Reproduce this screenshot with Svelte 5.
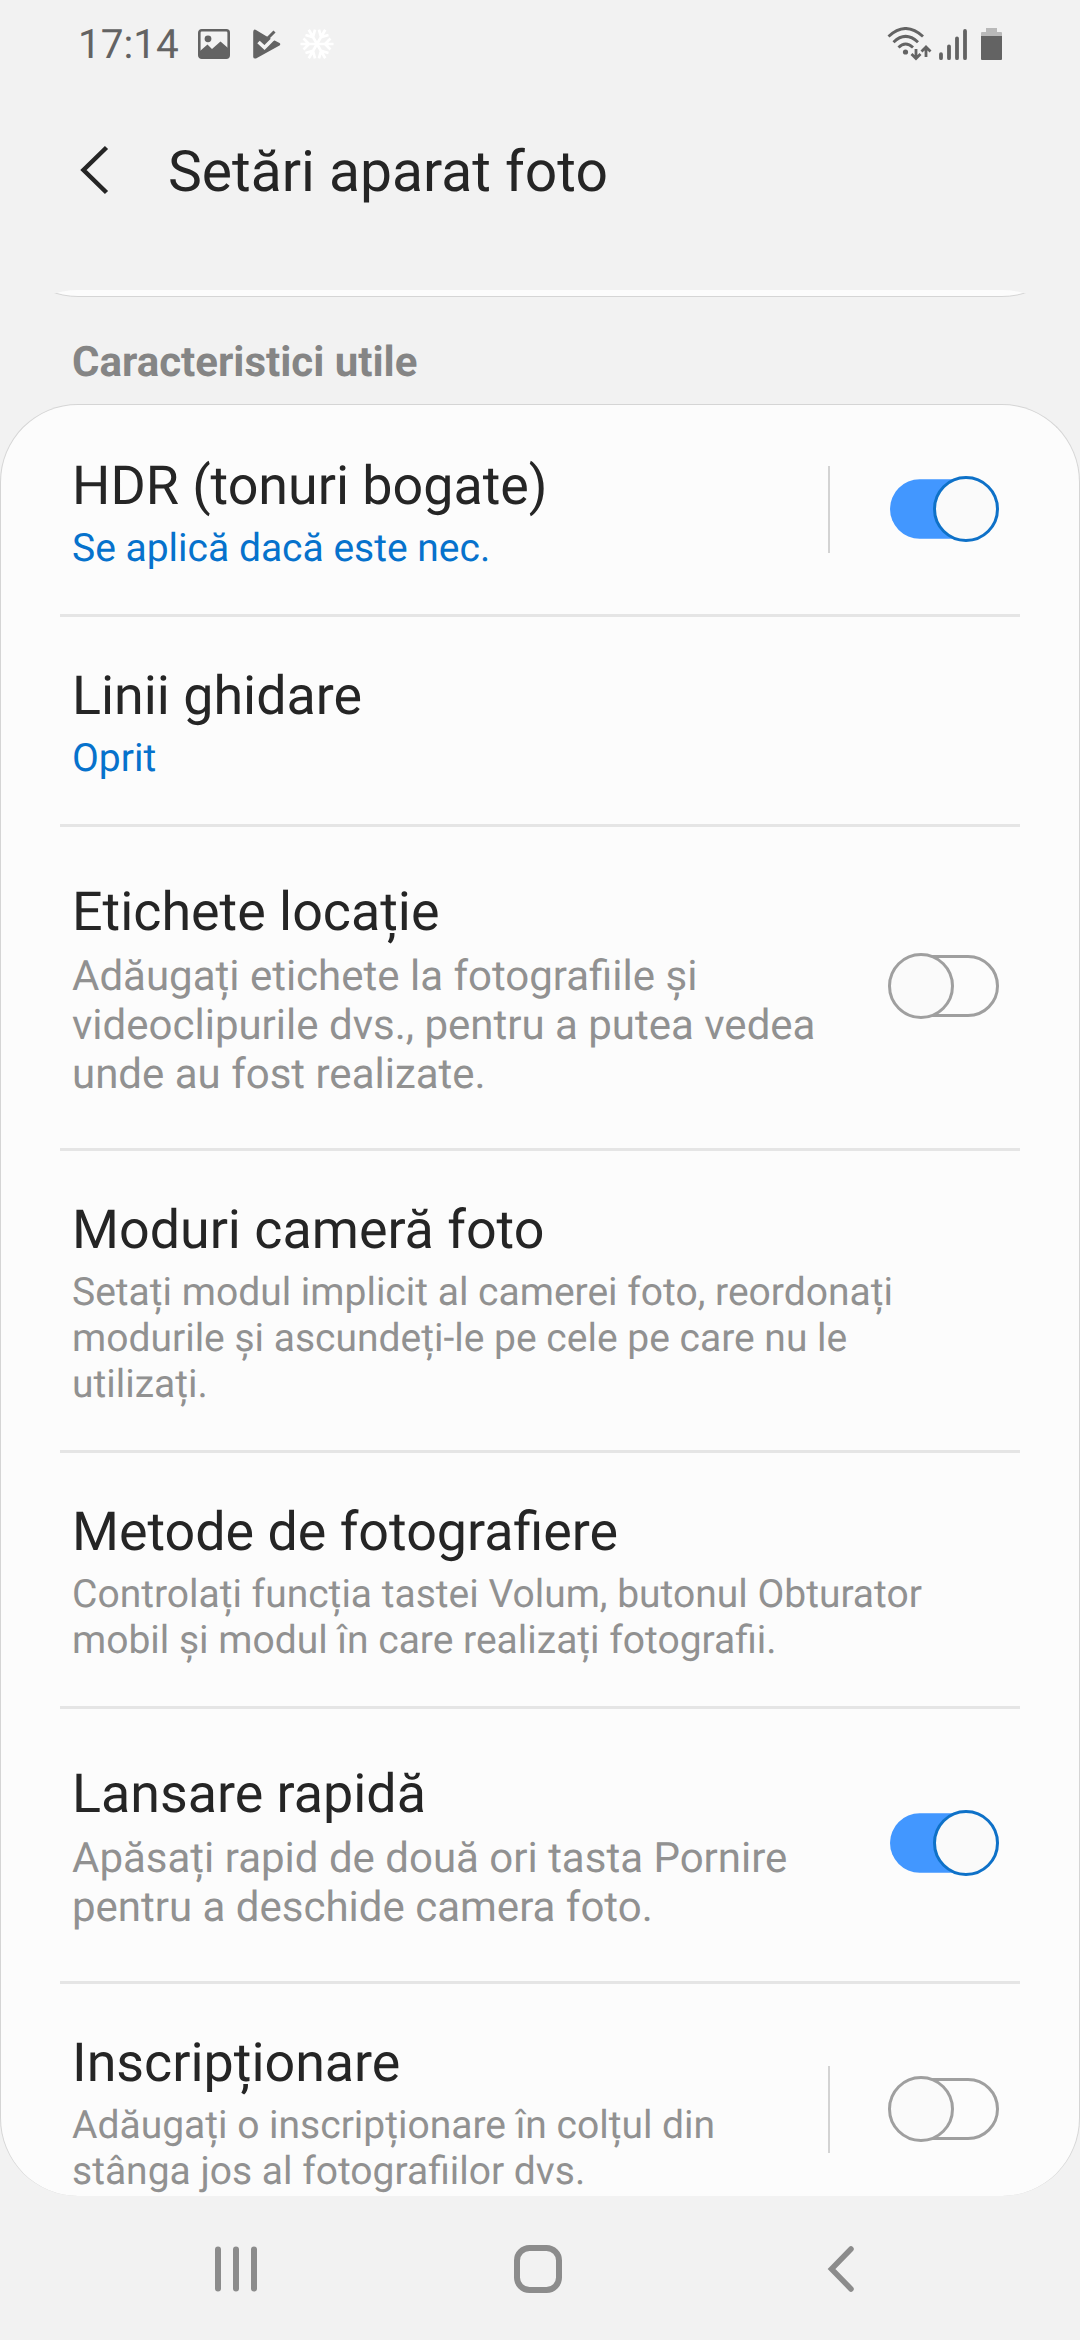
<script lang="ts">
  interface Setting {
    title: string;
    lines: string[];
    size: string;
    active?: boolean;
    toggle?: boolean;
    divided?: boolean;
  }

  let settings: Setting[] = $state([
    { title: 'HDR (tonuri bogate)', lines: ['Se aplică dacă este nec.'], size: 'hdr', active: true, toggle: true, divided: true },
    { title: 'Linii ghidare', lines: ['Oprit'], size: 'grid-lines', active: true },
    {
      title: 'Etichete locație',
      lines: ['Adăugați etichete la fotografiile și', 'videoclipurile dvs., pentru a putea vedea', 'unde au fost realizate.'],
      size: 'large location',
      toggle: false
    },
    {
      title: 'Moduri cameră foto',
      lines: ['Setați modul implicit al camerei foto, reordonați', 'modurile și ascundeți-le pe cele pe care nu le', 'utilizați.'],
      size: 'modes'
    },
    {
      title: 'Metode de fotografiere',
      lines: ['Controlați funcția tastei Volum, butonul Obturator', 'mobil și modul în care realizați fotografii.'],
      size: 'methods'
    },
    {
      title: 'Lansare rapidă',
      lines: ['Apăsați rapid de două ori tasta Pornire', 'pentru a deschide camera foto.'],
      size: 'large launch',
      toggle: true
    },
    {
      title: 'Inscripționare',
      lines: ['Adăugați o inscripționare în colțul din', 'stânga jos al fotografiilor dvs.'],
      size: 'watermark',
      toggle: false,
      divided: true
    }
  ]);
</script>

<div class="screen">
  <div class="status">
    <span class="clock">17:14</span>
    <svg class="picture" width="32" height="30" viewBox="0 0 32 30">
      <rect x="1.3" y="1.3" width="29.4" height="27.4" rx="2.4" fill="none" stroke="#636363" stroke-width="2.6" />
      <circle cx="10" cy="9.8" r="3.4" fill="#636363" />
      <path d="M2 22 9.500 15.500 14 20 22.500 12.500 30 19V28.500H2z" fill="#636363" />
    </svg>
    <svg class="play" width="28" height="30" viewBox="0 0 28 30">
      <path d="M.5 1.500Q1.500 0 3 1L13 7 26.500 14Q28 15 26.500 16.500L3 29.500Q.5 30 .2 28V3z" fill="#636363" />
      <path d="M15 6.500 22 2 25 9 20 12" fill="#f2f2f2" />
      <path d="M5.500 13 11.500 18.500 22.500 7.500" fill="none" stroke="#f2f2f2" stroke-width="3.600" />
      <path d="M8.500 8.500 12 12 21.500 2.500" fill="none" stroke="#636363" stroke-width="3" />
    </svg>
    <svg class="snow" width="34" height="32" viewBox="-17 -16 34 32" fill="none" stroke="#fff" stroke-width="2.700">
      {#each [0, 60, 120, 180, 240, 300] as angle}
        <path d="M0 0H16.500M8 0 13.500-5.500M8 0 13.500 5.500" transform="rotate({angle})" />
      {/each}
    </svg>
    <span class="spacer"></span>
    <svg class="signals" width="116" height="34" viewBox="0 0 116 34">
      <g fill="none" stroke="#636363" stroke-width="2.900">
        <path d="M1.500 9.500Q18.500-6.500 36 9.500M6.500 15.300Q18.500 3.500 31 15.300M11.500 20.500Q18.500 13.500 26 20.500" />
        <path d="M29 22V31M24.500 27 29 31.500 33.500 27M39 30V20M34.500 24.500 39 20 43.500 24.500" stroke-width="2.800" />
        <path d="M54 27.200V31.200M62 19.300V31.200M70 11.300V31.200M78 4V31.200" stroke-width="3.800" stroke-linecap="round" />
      </g>
      <circle cx="18.500" cy="25" r="2.600" fill="#636363" />
      <path d="M94 10V6Q94 5 95 5H99V1H110V5H114Q115 5 115 6V10z" fill="#b9b9b9" />
      <path d="M94 9H115V32Q115 33 114 33H95Q94 33 94 32z" fill="#636363" />
    </svg>
  </div>

  <header>
    <svg width="32" height="52" viewBox="0 0 32 52" fill="none" stroke="#252525" stroke-width="4.500">
      <path d="M29.500 3.500 6.500 26 29.500 48.500" />
    </svg>
    <h1>Setări aparat foto</h1>
  </header>

  <div class="previous"><div class="previous-card"></div></div>
  <h2>Caracteristici utile</h2>

  <main>
    {#each settings as setting}
      <section class="row {setting.size}">
        <div class="text">
          <h3>{setting.title}</h3>
          <p class:active={setting.active}>
            {#each setting.lines as line}
              <span>{line}</span>
            {/each}
          </p>
        </div>
        {#if setting.toggle !== undefined}
          {#if setting.divided}
            <i class="separator"></i>
          {/if}
          <button
            class="switch"
            role="switch"
            aria-checked={setting.toggle}
            aria-label={setting.title}
            onclick={() => (setting.toggle = !setting.toggle)}
          >
            <svg width="112" height="66" viewBox="0 0 112 66">
              {#if setting.toggle}
                <rect x="2" y="3.300" width="106" height="59.400" rx="29.700" fill="#4297ff" />
                <circle cx="78" cy="33" r="31.500" fill="#fafafa" stroke="#0e71c8" stroke-width="3" />
              {:else}
                <rect x="2.500" y="3.500" width="107" height="59" rx="29.500" fill="none" stroke="#9f9f9f" stroke-width="3" />
                <circle cx="33" cy="33" r="31.500" fill="#fafafa" stroke="#9f9f9f" stroke-width="3" />
              {/if}
            </svg>
          </button>
        {/if}
      </section>
    {/each}
  </main>

  <nav>
    <svg class="recents" width="44" height="48" viewBox="0 0 44 48" stroke="#8c8c8c" stroke-width="6" stroke-linecap="round">
      <path d="M4 4.500V43.500M22 4.500V43.500M40 4.500V43.500" />
    </svg>
    <svg class="home" width="48" height="48" viewBox="0 0 48 48" fill="none" stroke="#8c8c8c" stroke-width="6">
      <rect x="3" y="3" width="42" height="42" rx="12.500" />
    </svg>
    <svg width="28" height="48" viewBox="0 0 28 48" fill="none" stroke="#8c8c8c" stroke-width="5.500" stroke-linecap="round">
      <path d="M24 4 4.500 24 24 44" />
    </svg>
  </nav>
</div>

<style>
  :global(body) {
    background: #f2f2f2;
  }

  .screen {
    width: 1080px;
    height: 2340px;
    display: flex;
    flex-direction: column;
    overflow: hidden;
    background: #f2f2f2;
    color: #252525;
    font-family: Roboto, sans-serif;
    text-rendering: geometricPrecision;
  }

  h1,
  h2,
  h3,
  p {
    margin: 0;
    font-weight: 400;
    white-space: nowrap;
  }

  svg {
    display: block;
    flex: none;
  }

  .status {
    height: 88px;
    box-sizing: border-box;
    display: flex;
    align-items: center;
    padding: 0 77px 0 78px;
    color: #636363;
  }

  .clock {
    width: 120px;
    font-size: 40.5px;
  }

  .play {
    margin-left: 23px;
  }

  .snow {
    margin-left: 19px;
  }

  .spacer {
    flex: 1;
  }

  header {
    height: 202px;
    box-sizing: border-box;
    display: flex;
    align-items: flex-start;
    gap: 59px;
    padding: 56px 77px 0;
  }

  h1 {
    font-size: 57px;
    line-height: 56px;
  }

  .previous {
    height: 7px;
    display: flex;
    align-items: flex-end;
    overflow: hidden;
    clip-path: inset(0 0 -180px 0 round 78px);
  }

  .previous-card {
    flex: 1;
    height: 160px;
    box-sizing: border-box;
    border: 1px solid #d5d5d5;
    border-radius: 78px;
    background: #fcfcfc;
  }

  h2 {
    height: 107px;
    box-sizing: border-box;
    padding: 42px 72px 0;
    font-size: 42px;
    line-height: 48px;
    font-weight: 700;
    color: #858585;
  }

  main {
    height: 1792px;
    box-sizing: border-box;
    padding-top: 2px;
    overflow: hidden;
    border: 1px solid #d5d5d5;
    border-bottom: 0;
    border-radius: 78px;
    background: #fcfcfc;
  }

  .row {
    display: flex;
    align-items: center;
    margin: 0 59px;
    padding: 0 20px 3px 12px;
    box-sizing: border-box;
    border-bottom: 3px solid #e5e5e5;
  }

  .text {
    flex: 1;
    align-self: flex-start;
    padding-top: 48px;
  }

  h3 {
    font-size: 53.8px;
    line-height: 63px;
  }

  p {
    margin-top: 7px;
    font-size: 39px;
    line-height: 46px;
    color: #919191;
  }

  p span {
    display: block;
  }

  .active {
    color: #0672cc;
  }

  .large .text {
    padding-top: 54px;
  }

  .large p {
    margin-top: 8px;
    font-size: 42px;
    line-height: 49px;
  }

  .hdr {
    height: 210px;
  }

  .grid-lines {
    height: 210px;
  }

  .location {
    height: 324px;
  }

  .modes {
    height: 302px;
  }

  .methods {
    height: 256px;
  }

  .launch {
    height: 275px;
    padding-bottom: 4px;
  }

  .watermark {
    height: 253px;
    border-bottom: 0;
  }

  .separator {
    width: 2px;
    height: 87px;
    margin-right: 58px;
    background: #d3d3d3;
  }

  .switch {
    padding: 0;
    border: 0;
    background: none;
    cursor: pointer;
  }

  nav {
    flex: 1;
    display: flex;
    align-items: flex-start;
    padding: 49px 214px 0;
  }

  .recents {
    margin-right: 256px;
  }

  .home {
    margin-right: 265px;
  }
</style>
